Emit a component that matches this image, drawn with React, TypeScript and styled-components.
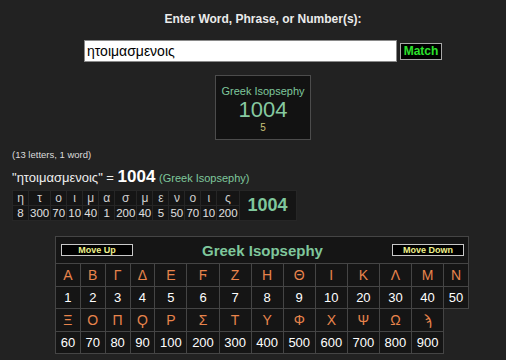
import styled, { createGlobalStyle } from 'styled-components';

const GlobalStyle = createGlobalStyle`
  html, body {
    margin: 0;
    padding: 0;
    background: #222222;
  }
  body {
    font-family: "Liberation Sans", Arial, "DejaVu Sans", sans-serif;
    color: #e8e8e8;
  }
`;

const Page = styled.div`
  width: 506px;
  height: 360px;
  overflow: hidden;
  box-sizing: border-box;
  padding-left: 12px;
`;

const Center = styled.div`
  display: flex;
  flex-direction: column;
  align-items: center;
  padding-left: 8px;
`;

const Heading = styled.div`
  margin-top: 12px;
  font-size: 12px;
  line-height: 14px;
  font-weight: bold;
  color: #ebebeb;
`;

const SearchRow = styled.div`
  display: flex;
  align-items: center;
  margin-top: 14px;
`;

const SearchInput = styled.input`
  box-sizing: border-box;
  width: 313px;
  height: 22px;
  border: 1px solid #8a8a8a;
  padding: 0 2px;
  font-family: "Liberation Sans", Arial, sans-serif;
  font-size: 14px;
  color: #000;
  background: #fff;
  outline: none;
`;

const MatchButton = styled.button`
  box-sizing: border-box;
  margin-left: 3px;
  width: 42px;
  height: 17px;
  padding: 0;
  background: #000;
  border: 1px solid #a8a8a8;
  color: #2de02d;
  font-family: "Liberation Sans", Arial, sans-serif;
  font-size: 12px;
  font-weight: bold;
`;

const ResultBox = styled.div`
  box-sizing: border-box;
  margin-top: 13px;
  width: 96px;
  height: 65px;
  border: 1px solid #4c4c4c;
  background: #121212;
  display: flex;
  flex-direction: column;
  align-items: center;
  padding-top: 9px;
`;

const ResultLabel = styled.div`
  font-size: 11px;
  line-height: 13px;
  color: #7fc79c;
`;

const ResultValue = styled.div`
  font-size: 22px;
  line-height: 23px;
  color: #86c9a0;
`;

const ResultCount = styled.div`
  margin-top: 1px;
  font-size: 10px;
  line-height: 12px;
  color: #c9c27a;
`;

const Note = styled.div`
  margin-top: 9px;
  font-size: 9.5px;
  line-height: 12px;
  color: #dcdcdc;
`;

const Summary = styled.div`
  margin-top: 6px;
  font-size: 13px;
  line-height: 20px;
  color: #eeeeee;
`;

const SummaryTotal = styled.b`
  font-size: 17px;
  color: #ffffff;
`;

const SummarySource = styled.span`
  font-size: 11px;
  color: #7fc79c;
`;

const Breakdown = styled.table`
  margin-top: 2px;
  border-collapse: collapse;
`;

const BreakCell = styled.td<{ $letter?: boolean }>`
  border: 1px solid #262626;
  background: #151515;
  padding: 0 1px;
  min-width: 13px;
  height: 14px;
  text-align: center;
  font-size: ${(p) => (p.$letter ? '12px' : '11.5px')};
  line-height: 14px;
  color: ${(p) => (p.$letter ? '#cfcfcf' : '#e0e0e0')};
`;

const BreakTotal = styled.td`
  border: 1px solid #262626;
  background: #151515;
  padding: 0 8px;
  font-size: 18px;
  font-weight: bold;
  color: #7fc79c;
  text-align: center;
`;

const Chart = styled.table`
  margin: 15px 0 0 43px;
  border-collapse: collapse;
`;

const HeaderCell = styled.td`
  border: 1px solid #454545;
  background: #151515;
  height: 26px;
  padding: 0 4px 0 5px;
`;

const HeaderBar = styled.div`
  display: flex;
  align-items: center;
  justify-content: space-between;
`;

const MoveButton = styled.button`
  box-sizing: border-box;
  width: 72px;
  height: 12px;
  padding: 0;
  background: #000;
  border: 1px solid #c8c8c8;
  color: #eef08a;
  font-family: "Liberation Sans", Arial, sans-serif;
  font-size: 9px;
  font-weight: bold;
  line-height: 10px;
`;

const ChartTitle = styled.div`
  font-size: 15px;
  font-weight: bold;
  color: #7fc79c;
`;

const ChartCell = styled.td<{ $letter?: boolean }>`
  border: 1px solid #454545;
  background: #151515;
  padding: 0 4.7px;
  text-align: center;
  height: ${(p) => (p.$letter ? '22px' : '21px')};
  font-family: "Liberation Sans", Arial, "DejaVu Sans", sans-serif;
  font-size: ${(p) => (p.$letter ? '14px' : '13px')};
  color: ${(p) => (p.$letter ? '#e8844c' : '#ffffff')};
`;

const word = 'ητοιμασμενοις';
const letters = ['η', 'τ', 'ο', 'ι', 'μ', 'α', 'σ', 'μ', 'ε', 'ν', 'ο', 'ι', 'ς'];
const letterValues = [8, 300, 70, 10, 40, 1, 200, 40, 5, 50, 70, 10, 200];

const chartRows: { glyphs: string[]; values: number[] }[] = [
  {
    glyphs: ['Α', 'Β', 'Γ', 'Δ', 'Ε', 'Ϝ', 'Ζ', 'Η', 'Θ', 'Ι', 'Κ', 'Λ', 'Μ', 'Ν'],
    values: [1, 2, 3, 4, 5, 6, 7, 8, 9, 10, 20, 30, 40, 50],
  },
  {
    glyphs: ['Ξ', 'Ο', 'Π', 'Ϙ', 'Ρ', 'Σ', 'Τ', 'Υ', 'Φ', 'Χ', 'Ψ', 'Ω', 'ϡ'],
    values: [60, 70, 80, 90, 100, 200, 300, 400, 500, 600, 700, 800, 900],
  },
];

export default function App() {
  const total = letterValues.reduce((a, b) => a + b, 0);
  return (
    <Page>
      <GlobalStyle />
      <Center>
        <Heading>Enter Word, Phrase, or Number(s):</Heading>
        <SearchRow>
          <SearchInput defaultValue={word} />
          <MatchButton>Match</MatchButton>
        </SearchRow>
        <ResultBox>
          <ResultLabel>Greek Isopsephy</ResultLabel>
          <ResultValue>{total}</ResultValue>
          <ResultCount>5</ResultCount>
        </ResultBox>
      </Center>
      <Note>(13 letters, 1 word)</Note>
      <Summary>
        "{word}" = <SummaryTotal>{total}</SummaryTotal>{' '}
        <SummarySource>(Greek Isopsephy)</SummarySource>
      </Summary>
      <Breakdown>
        <tbody>
          <tr>
            {letters.map((l, i) => (
              <BreakCell key={i} $letter>
                {l}
              </BreakCell>
            ))}
            <BreakTotal rowSpan={2}>{total}</BreakTotal>
          </tr>
          <tr>
            {letterValues.map((v, i) => (
              <BreakCell key={i}>{v}</BreakCell>
            ))}
          </tr>
        </tbody>
      </Breakdown>
      <Chart>
        <tbody>
          <tr>
            <HeaderCell colSpan={14}>
              <HeaderBar>
                <MoveButton>Move Up</MoveButton>
                <ChartTitle>Greek Isopsephy</ChartTitle>
                <MoveButton>Move Down</MoveButton>
              </HeaderBar>
            </HeaderCell>
          </tr>
          {chartRows.map((row, r) => [
            <tr key={`g${r}`}>
              {row.glyphs.map((g, i) => (
                <ChartCell key={i} $letter>
                  {g}
                </ChartCell>
              ))}
            </tr>,
            <tr key={`v${r}`}>
              {row.values.map((v, i) => (
                <ChartCell key={i}>{v}</ChartCell>
              ))}
            </tr>,
          ])}
        </tbody>
      </Chart>
    </Page>
  );
}
